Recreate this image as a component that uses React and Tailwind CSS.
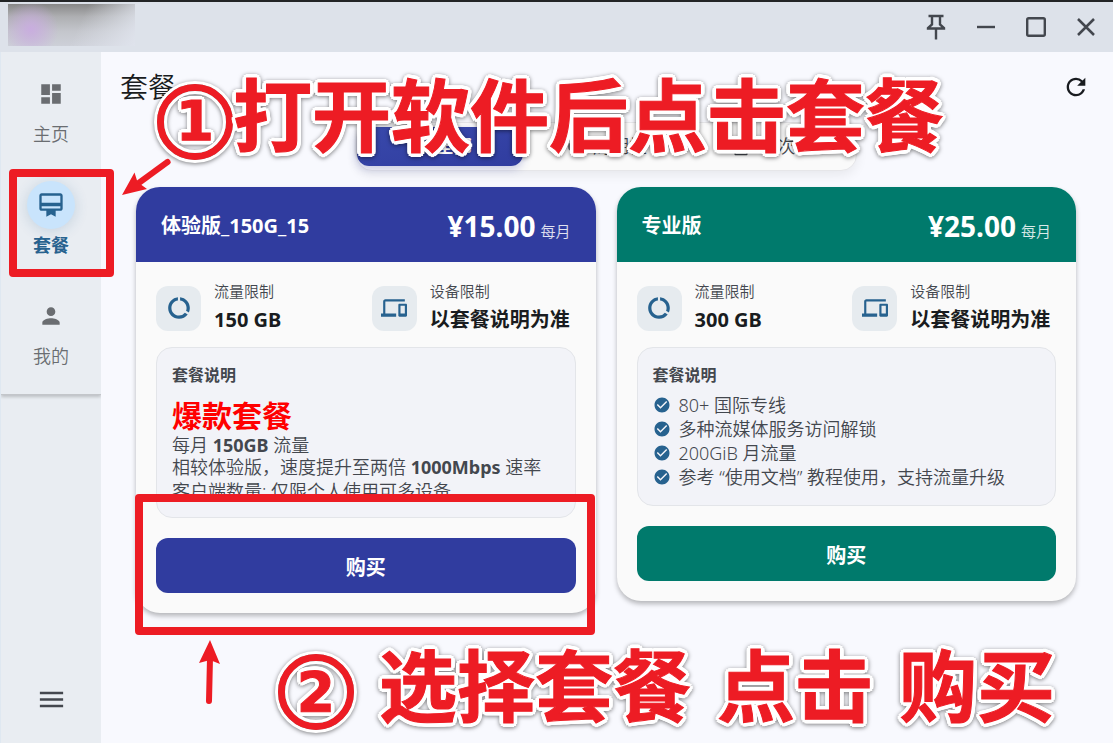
import {
  MdDashboard,
  MdOutlineCardMembership,
  MdPerson,
  MdMenu,
  MdDataUsage,
  MdDevices,
  MdCheckCircle,
  MdRefresh,
  MdAutorenew,
  MdOutlineShoppingBag,
  MdApps,
} from "react-icons/md";

function TitleBar() {
  const button = "flex w-[50px] items-center justify-center";
  return (
    <header className="flex h-[52px] shrink-0 justify-between border-t-2 border-[#222426] bg-[#dde2ea] text-[#43474e]">
      <div
        className="ml-2 mt-[2px] h-[42px] w-[127px] bg-[radial-gradient(circle_at_18%_60%,#c9addf_0%,#c9addf00_26%),linear-gradient(115deg,#c8cad000_55%,#dfe3ec_100%),linear-gradient(180deg,#878787_0%,#aeafb2_30%,#c4c6cc_65%,#cdd0d8_100%)]"
        aria-hidden="true"
      />
      <div className="flex pr-[2px]">
        <button aria-label="Pin" className={button}>
          <svg width="20" height="26" viewBox="0 0 20 26" fill="none" stroke="currentColor" strokeWidth="2.400">
            <path d="M2.500 2h15M6 2v8.500L2 14v.5h16V14L14 10.500V2M10 14v11.500" />
          </svg>
        </button>
        <button aria-label="Minimize" className={button}>
          <svg width="18" height="18" viewBox="0 0 18 18" stroke="currentColor" strokeWidth="2.400">
            <path d="M0 9h18" />
          </svg>
        </button>
        <button aria-label="Maximize" className={button}>
          <svg width="20" height="20" viewBox="0 0 20 20" fill="none" stroke="currentColor" strokeWidth="2.400">
            <rect x="1.200" y="1.200" width="17.600" height="17.600" rx="1.500" />
          </svg>
        </button>
        <button aria-label="Close" className={button}>
          <svg width="18" height="18" viewBox="0 0 18 18" stroke="currentColor" strokeWidth="2.500">
            <path d="M1 1l16 16M17 1L1 17" />
          </svg>
        </button>
      </div>
    </header>
  );
}

function Sidebar() {
  const item = "flex h-[111px] flex-col items-center pt-[18px] text-[18px] leading-6";
  const round = "flex size-12 items-center justify-center rounded-full";
  return (
    <aside className="flex w-[101px] shrink-0 flex-col justify-between overflow-hidden border-l border-[#dfe8f1] bg-[#e9edf2]">
      <nav className="border-b border-[#c3c6ca] pb-[9px] text-[#6a6d71] shadow-[0_2px_3px_#00000030]">
        <a href="#home" className={item}>
          <span className={round}>
            <MdDashboard size={26} />
          </span>
          <span className="mt-1 font-[350]">主页</span>
        </a>
        <a href="#plans" className={item + " text-[#27628f]"}>
          <span className={round + " bg-[#c9e4fc] shadow-[0_2px_14px_#27628f30]"}>
            <MdOutlineCardMembership size={28} />
          </span>
          <span className="mt-1 font-bold">套餐</span>
        </a>
        <a href="#me" className={item}>
          <span className={round}>
            <MdPerson size={26} />
          </span>
          <span className="mt-1 font-[350]">我的</span>
        </a>
      </nav>
      <button aria-label="Menu" className="flex h-[88px] items-center justify-center text-[#43474e]">
        <MdMenu size={31} />
      </button>
    </aside>
  );
}

function Tabs() {
  const tab = "flex min-w-0 flex-1 items-center justify-center gap-2 rounded-xl";
  return (
    <div className="mx-auto flex h-[49px] w-[501px] rounded-2xl border border-[#e6e6e9] bg-[#fafafa] pb-1 pt-1 text-[18px] text-[#43474e] shadow-[0_4px_12px_#00000012]">
      <button className={tab + " bg-linear-to-br from-[#3949ab] to-[#303c9f] font-bold text-white shadow-[0_3px_8px_#303c9f40]"}>
        <MdApps size={20} />
        全部
      </button>
      <button className={tab + " font-[350]"}>
        <MdAutorenew size={20} />
        周期性
      </button>
      <button className={tab + " font-[350]"}>
        <MdOutlineShoppingBag size={20} />
        一次性
      </button>
    </div>
  );
}

function Limit({ icon: Icon, label, value }) {
  return (
    <div className="flex items-center gap-[13px]">
      <span className="flex size-[45px] shrink-0 items-center justify-center rounded-xl bg-[#e6ebef] text-[#27628f]">
        <Icon size={26} />
      </span>
      <div className="whitespace-nowrap">
        <div className="text-[15px] font-[350] leading-6 text-[#43474e]">{label}</div>
        <div className="text-[20px] font-bold leading-[34px] text-[#191c20]">{value}</div>
      </div>
    </div>
  );
}

function PlanCard({ name, price, traffic, head, children }) {
  return (
    <section className="overflow-hidden rounded-3xl bg-[#fafafa] shadow-[0_3px_5px_#00000045]">
      <div className={"flex h-[75px] items-center justify-between px-[25px] pt-[3px] text-white " + head}>
        <h2 className="text-[20px] font-bold">{name}</h2>
        <div className="flex items-baseline gap-[5px]">
          <span className="text-[28px] font-bold">{price}</span>
          <span className="text-[15px] font-[350] text-white/85">每月</span>
        </div>
      </div>
      <div className="px-5 pb-5 pt-[17px]">
        <div className="grid grid-cols-2 gap-3">
          <Limit icon={MdDataUsage} label="流量限制" value={traffic} />
          <Limit icon={MdDevices} label="设备限制" value="以套餐说明为准" />
        </div>
        {children}
        <button className={"mt-5 h-[55px] w-full rounded-xl pt-1 text-[20px] font-bold text-white " + head}>购买</button>
      </div>
    </section>
  );
}

const features = ["80+ 国际专线", "多种流媒体服务访问解锁", "200GiB 月流量", "参考 “使用文档” 教程使用，支持流量升级"];

function Plans() {
  const box =
    "mt-[10px] overflow-hidden rounded-2xl border border-[#e3e5e9] bg-[#f2f3f8] px-[15px] pt-[15px] text-[18px] font-[350] text-[#43474e]";
  return (
    <div className="mt-4 grid grid-cols-2 items-start gap-[21px]">
      <PlanCard name="体验版_150G_15" price="¥15.00" traffic="150 GB" head="bg-[#303c9f]">
        <div className={box + " h-[171px]"}>
          <h3 className="text-[16px] font-bold leading-6">套餐说明</h3>
          <div className="mt-1 h-[109px]">
            <p className="pt-2 text-[30px] font-bold leading-[34px] text-[#ff0000]">爆款套餐</p>
            <p className="leading-6">
              每月 <b className="font-bold">150GB</b> 流量
            </p>
            <p className="leading-5">
              相较体验版，速度提升至两倍 <b className="font-bold">1000Mbps</b> 速率
            </p>
            <p className="leading-7">客户端数量: 仅限个人使用可多设备</p>
          </div>
        </div>
      </PlanCard>
      <PlanCard name="专业版" price="¥25.00" traffic="300 GB" head="bg-[#007a6c]">
        <div className={box + " h-[159px]"}>
          <h3 className="text-[16px] font-bold leading-6">套餐说明</h3>
          <ul className="mt-[6px]">
            {features.map((text) => (
              <li key={text} className="flex items-center gap-2 whitespace-nowrap leading-6">
                <MdCheckCircle size={18} className="text-[#27628f]" />
                {text}
              </li>
            ))}
          </ul>
        </div>
      </PlanCard>
    </div>
  );
}

const outline =
  "[-webkit-text-stroke:1px_#ed1c24] [text-shadow:4px_0_#fff,-4px_0_#fff,0_4px_#fff,0_-4px_#fff,3px_3px_#fff,-3px_3px_#fff,3px_-3px_#fff,-3px_-3px_#fff,4px_1px_#fff,4px_-1px_#fff,-4px_1px_#fff,-4px_-1px_#fff,1px_4px_#fff,-1px_4px_#fff,1px_-4px_#fff,-1px_-4px_#fff]";

function Callout({ number, words, place, size }) {
  return (
    <div
      className={
        "pointer-events-none absolute flex items-center whitespace-nowrap font-bold text-[#ed1c24] drop-shadow-[0_1px_2px_#00000080] " +
        place
      }
    >
      <span className="flex size-[82px] shrink-0 items-center justify-center rounded-full border-[3px] border-white">
        <span className="flex size-[76px] items-center justify-center rounded-full border-[7px] border-[#ed1c24]">
          <span
            className={
              "flex size-[62px] items-center justify-center rounded-full border-[3px] border-white font-['DejaVu_Sans',sans-serif] text-[55px] leading-none " +
              outline
            }
          >
            {number}
          </span>
        </span>
      </span>
      <span className={"flex pb-3 leading-none " + outline + " " + size}>
        {words.map((word) => (
          <span key={word}>{word}</span>
        ))}
      </span>
    </div>
  );
}

function Annotations() {
  return (
    <>
      <div className="pointer-events-none absolute left-[9px] top-[169px] h-[108px] w-[105px] rounded border-8 border-[#ed1c24]" />
      <div className="pointer-events-none absolute left-[135px] top-[494px] h-[141px] w-[460px] rounded border-8 border-[#ed1c24]" />
      <svg
        className="pointer-events-none absolute left-[120px] top-[158px]"
        width="52"
        height="40"
        viewBox="0 0 52 40"
        fill="#ed1c24"
      >
        <path d="M47.500 4L16 27" stroke="#ed1c24" strokeWidth="6" strokeLinecap="round" />
        <path d="M2 37L14.500 14.500L17.500 24L27 31Z" />
      </svg>
      <svg
        className="pointer-events-none absolute left-[198px] top-[640px]"
        width="24"
        height="66"
        viewBox="0 0 24 66"
        fill="#ed1c24"
      >
        <path d="M11 61L12 18" stroke="#ed1c24" strokeWidth="6" strokeLinecap="round" />
        <path d="M12 0L22 24L12 20L1 23Z" />
      </svg>
      <Callout number="1" words={["打开软件后点击套餐"]} place="left-[154px] top-[76px]" size="-ml-[3px] text-[79px]" />
      <Callout number="2" words={["选择套餐", "点击", "购买"]} place="left-[275px] top-[647px] gap-[22px]" size="gap-[26px] text-[78px]" />
    </>
  );
}

export default function App() {
  return (
    <div className="relative flex min-h-screen flex-col overflow-hidden bg-[#f8f9fe] font-['Noto_Sans','Noto_Sans_CJK_SC',sans-serif]">
      <TitleBar />
      <div className="flex flex-1">
        <Sidebar />
        <main className="min-w-0 flex-1 pl-[35px] pr-[37px]">
          <div className="-ml-4 -mr-[14px] flex h-[70px] items-center justify-between text-[#191c20]">
            <h1 className="text-[28px] font-[350]">套餐</h1>
            <button aria-label="Refresh" className="flex size-7 items-center justify-center">
              <MdRefresh size={28} />
            </button>
          </div>
          <Tabs />
          <Plans />
        </main>
      </div>
      <Annotations />
    </div>
  );
}
